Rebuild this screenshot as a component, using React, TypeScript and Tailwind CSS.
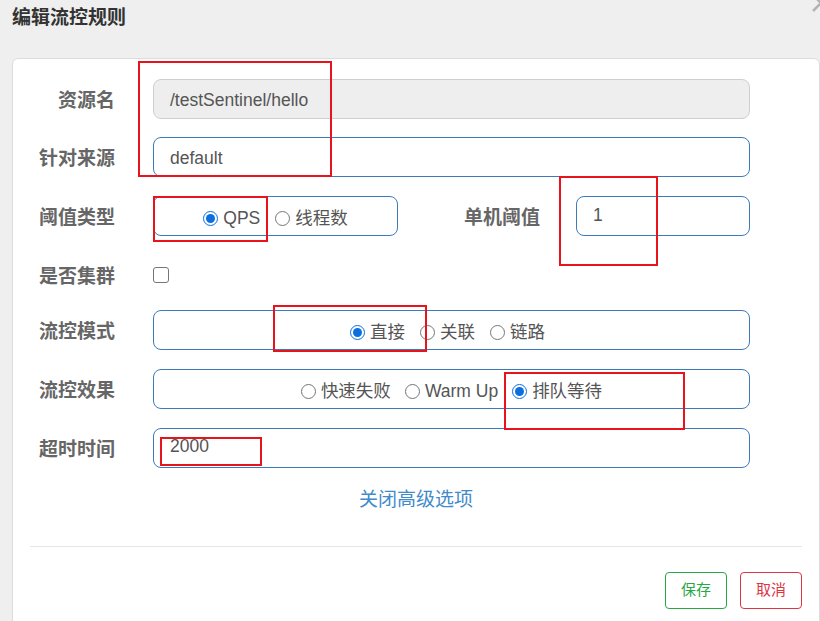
import type { ReactNode } from "react";

const FONT = { fontFamily: '"Liberation Sans", "Noto Sans CJK SC", sans-serif' };

function Radio({ label, checked }: { label: string; checked?: boolean }) {
  return (
    <span className="inline-flex translate-y-[2px] items-center gap-[5px]">
      {checked ? (
        <span className="grid h-[15px] w-[15px] place-items-center rounded-full border border-[#0b6fe0] bg-white">
          <span className="h-[9px] w-[9px] rounded-full bg-[#0b6fe0]" />
        </span>
      ) : (
        <span className="h-[15px] w-[15px] rounded-full border border-[#767676] bg-white" />
      )}
      <span className="text-[17.5px] text-[#555]">{label}</span>
    </span>
  );
}

function Row({ label, children, className = "" }: { label: string; children: ReactNode; className?: string }) {
  return (
    <div className={`flex h-10 items-center ${className}`}>
      <label className="w-[102px] shrink-0 translate-y-[2px] text-right text-[19px] font-bold text-[#666]">{label}</label>
      <div className="ml-[38px] flex h-full items-center">{children}</div>
    </div>
  );
}

const box = "flex h-10 items-center rounded-lg border border-[#3b7bbd] bg-white";

// red annotation rectangles from the screenshot
const marks = [
  "left-[138px] top-[61px] h-[116px] w-[194px]",
  "left-[559px] top-[176px] h-[90px] w-[99px]",
  "left-[153px] top-[196px] h-[46px] w-[115px]",
  "left-[273px] top-[305px] h-[47px] w-[154px]",
  "left-[504px] top-[372px] h-[58px] w-[181px]",
  "left-[160px] top-[437px] h-[29px] w-[102px]",
];

export default function App() {
  return (
    <div className="relative h-[621px] overflow-hidden bg-[#efefef]" style={FONT}>
      <div className="h-[58px] pl-3 pt-[6px]">
        <h4 className="text-[19px] font-bold leading-6 text-[#333]">编辑流控规则</h4>
      </div>
      <svg className="absolute left-[810px] top-[-8px]" width="22" height="22" viewBox="0 0 22 22">
        <path d="M3 3 L19 19 M19 3 L3 19" stroke="#b3b3b3" strokeWidth="2.5" />
      </svg>

      <div className="ml-3 rounded-t-md border border-[#dcdcdc] bg-white px-[17px] pb-10 pt-5">
        <div className="-ml-[17px]">
          <Row label="资源名" className="mb-[18px]">
            <div className="flex h-10 w-[597px] items-center rounded-lg border border-[#cfcfcf] bg-[#eee] pl-4 pt-[2px] text-[17.5px] text-[#555]">
              /testSentinel/hello
            </div>
          </Row>
          <Row label="针对来源" className="mb-[19px]">
            <div className={`${box} w-[597px] pl-4 pt-[2px] text-[17.5px] text-[#555]`}>default</div>
          </Row>
          <Row label="阈值类型" className="mb-[19px]">
            <div className={`${box} w-[245px] justify-center gap-[15px]`}>
              <Radio label="QPS" checked />
              <Radio label="线程数" />
            </div>
            <label className="w-[142px] translate-y-[2px] text-right text-[19px] font-bold text-[#666]">单机阈值</label>
            <div className={`${box} ml-9 w-[174px] pb-[2px] pl-4 text-[17.5px] text-[#555]`}>1</div>
          </Row>
          <Row label="是否集群" className="mb-[15px]">
            <span className="h-4 w-4 rounded-[3px] border border-[#767676] bg-white" />
          </Row>
          <Row label="流控模式" className="mb-[19px]">
            <div className={`${box} w-[597px] justify-center gap-[15px] pr-2`}>
              <Radio label="直接" checked />
              <Radio label="关联" />
              <Radio label="链路" />
            </div>
          </Row>
          <Row label="流控效果" className="mb-[19px]">
            <div className={`${box} w-[597px] justify-center gap-[14px]`}>
              <Radio label="快速失败" />
              <Radio label="Warm Up" />
              <Radio label="排队等待" checked />
            </div>
          </Row>
          <Row label="超时时间">
            <div className={`${box} w-[597px] pl-4 pb-1 text-[17.5px] text-[#555]`}>2000</div>
          </Row>
        </div>

        <div className="mt-[21px] text-center">
          <a className="text-[19px] leading-[22px] text-[#428bca]">关闭高级选项</a>
        </div>

        <hr className="mt-[33px] border-t border-[#e5e5e5]" />

        <div className="mt-[25px] flex justify-end gap-[13px]">
          <button className="h-[37px] w-[62px] rounded border border-[#28a745] text-[15px] text-[#28a745]">保存</button>
          <button className="h-[37px] w-[62px] rounded border border-[#dc3545] text-[15px] text-[#dc3545]">取消</button>
        </div>
      </div>

      {marks.map((m) => (
        <div key={m} className={`pointer-events-none absolute border-2 border-[#e8141c] ${m}`} />
      ))}
    </div>
  );
}
